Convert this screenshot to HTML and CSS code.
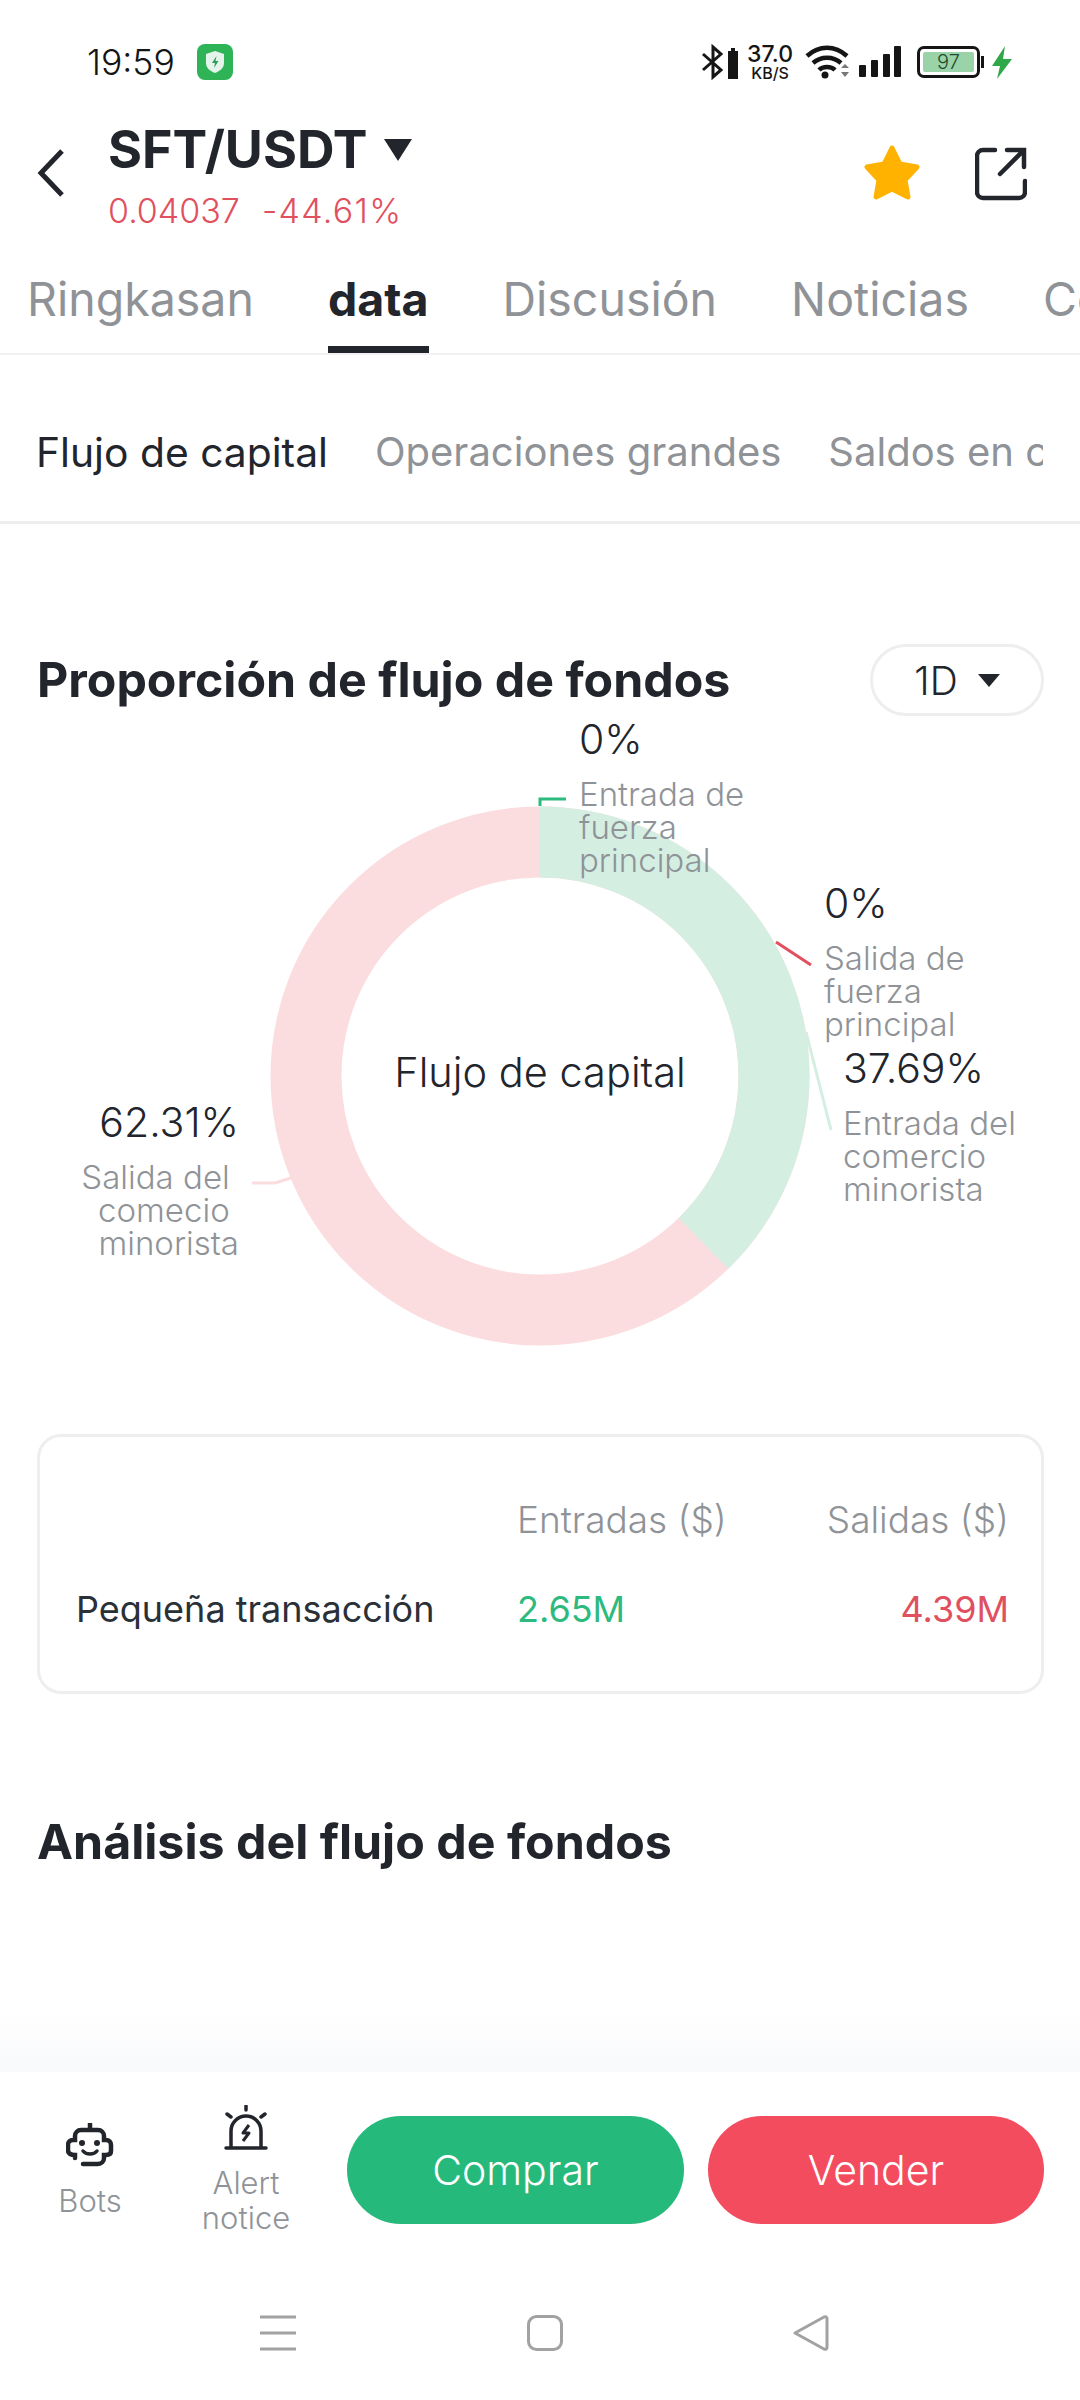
FILE: index.html
```html
<!DOCTYPE html>
<html lang="es">
<head>
  <meta charset="UTF-8">
  <meta name="viewport" content="width=device-width, initial-scale=1.0">
  <title>SFT/USDT</title>
  <link rel="stylesheet" href="styles.css">
</head>
<body>
  <div class="screen">

    <div class="status-bar">
      <div class="status-left">
        <span class="clock">19:59</span>
        <svg class="app-badge" width="36" height="36" viewBox="0 0 36 36">
          <rect width="36" height="36" rx="8" fill="#2eb457"/>
          <path d="M18 7l9 3v9c0 5-4 8-9 10-5-2-9-5-9-10v-9z" fill="#e4f4ea"/>
          <path d="M19.500 12l-4.500 7h3l-1 5 4.500-7h-3z" fill="#2a9d58"/>
        </svg>
      </div>
      <div class="status-right">
        <svg width="36" height="36" viewBox="0 0 36 36">
          <path d="M1 10l18 16-8 7V3l8 7L1 26" fill="none" stroke="#151515" stroke-width="3"/>
          <path d="M26 7h3V4h4v3h3v28H26z" fill="#151515"/>
        </svg>
        <div class="net-speed">
          <span class="net-value">37.0</span>
          <span class="net-unit">KB/S</span>
        </div>
        <svg class="wifi" width="46" height="36" viewBox="0 0 46 36">
          <path d="M2 12c12-11 28-11 40 0M8 19c8-7 20-7 28 0M14 26c4-4 12-4 16 0" fill="none" stroke="#151515" stroke-width="4.500"/>
          <circle cx="20" cy="31" r="3.500" fill="#151515"/>
          <path d="M36 24l4-4 4 4zM36 28l4 5 4-5z" fill="#777"/>
        </svg>
        <svg width="42" height="34" viewBox="0 0 42 34">
          <rect x="0" y="20" width="7" height="12" rx="1" fill="#151515"/>
          <rect x="12" y="15" width="7" height="17" rx="1" fill="#151515"/>
          <rect x="24" y="9" width="7" height="23" rx="1" fill="#151515"/>
          <rect x="35" y="1" width="7" height="31" rx="1" fill="#151515"/>
        </svg>
        <div class="battery">
          <span class="battery-level">97</span>
        </div>
        <svg class="bolt" width="20" height="33" viewBox="0 0 20 33">
          <path d="M13 0L0 20h8l-3 13 15-20h-9z" fill="#30a84a"/>
        </svg>
      </div>
    </div>

    <div class="top-bar">
      <svg class="back" width="30" height="50" viewBox="0 0 30 50">
        <path d="M25 3L4 25l21 22" fill="none" stroke="#22252b" stroke-width="5"/>
      </svg>
      <div class="pair">
        <div class="pair-name">SFT/USDT <span class="caret-big"></span></div>
        <div class="pair-price">
          <span>0.04037</span>
          <span class="pair-change">-44.61%</span>
        </div>
      </div>
      <svg class="star" width="58" height="56" viewBox="0 0 58 56">
        <path d="M29 3l8 16 17 3-12 13 3 17-16-8-16 8 3-17L4 22l17-3z" fill="#ffb300" stroke="#ffb300" stroke-width="5" stroke-linejoin="round"/>
      </svg>
      <svg class="share" width="52" height="54" viewBox="0 0 52 54">
        <path d="M20 3H8a6 6 0 0 0-6 6v36a6 6 0 0 0 6 6h36a6 6 0 0 0 6-6V34M25 27L48 4M32 3h17v17" fill="none" stroke="#22252b" stroke-width="4.500" stroke-linecap="round"/>
      </svg>
    </div>

    <div class="tabs">
      <span class="tab">Ringkasan</span>
      <span class="tab tab-active">data</span>
      <span class="tab">Discusión</span>
      <span class="tab">Noticias</span>
      <span class="tab">Comunidad</span>
    </div>

    <div class="subtabs">
      <div class="subtabs-track">
        <span class="subtab subtab-active">Flujo de capital</span>
        <span class="subtab">Operaciones grandes</span>
        <span class="subtab">Saldos en cadena</span>
      </div>
    </div>

    <main class="content">
      <div class="section-head">
        <h2>Proporción de flujo de fondos</h2>
        <div class="range-pill">1D <span class="caret-small"></span></div>
      </div>

      <div class="chart">
        <svg class="donut" width="1080" height="660" viewBox="0 0 1080 660">
          <path d="M540 99V92H566" fill="none" stroke="#2dba7f" stroke-width="3"/>
          <path d="M776 235L811 258" fill="none" stroke="#e0505f" stroke-width="3"/>
          <path d="M806 325L831 423" fill="none" stroke="#d4eee2" stroke-width="3"/>
          <path d="M252 476H275L291 471" fill="none" stroke="#fcdddf" stroke-width="3"/>
          <circle cx="540" cy="369" r="234" fill="none" stroke="#fcdddf" stroke-width="71"/>
          <circle cx="540" cy="369" r="234" fill="none" stroke="#d4eee2" stroke-width="71" pathLength="100" stroke-dasharray="37.69 62.31" transform="rotate(-90 540 369)"/>
        </svg>
        <div class="chart-center">Flujo de capital</div>

        <div class="slice slice-main-in">
          <div class="slice-pct">0%</div>
          <div class="slice-name">Entrada de<br>fuerza<br>principal</div>
        </div>
        <div class="slice slice-main-out">
          <div class="slice-pct">0%</div>
          <div class="slice-name">Salida de<br>fuerza<br>principal</div>
        </div>
        <div class="slice slice-retail-in">
          <div class="slice-pct">37.69%</div>
          <div class="slice-name">Entrada del<br>comercio<br>minorista</div>
        </div>
        <div class="slice slice-retail-out">
          <div class="slice-pct">62.31%</div>
          <div class="slice-name">Salida del&nbsp;<br>comecio&nbsp;<br>minorista</div>
        </div>
      </div>

      <div class="flow-card">
        <div class="flow-row flow-head">
          <span class="flow-label"></span>
          <span class="flow-in">Entradas ($)</span>
          <span class="flow-out">Salidas ($)</span>
        </div>
        <div class="flow-row">
          <span class="flow-label">Pequeña transacción</span>
          <span class="flow-in up">2.65M</span>
          <span class="flow-out down">4.39M</span>
        </div>
      </div>

      <h2 class="analysis-title">Análisis del flujo de fondos</h2>
    </main>

    <div class="action-fade"></div>
    <div class="action-bar">
      <div class="action-link action-bots">
        <svg width="48" height="44" viewBox="0 0 48 44">
          <path d="M24 1v6M17 41h15a6 6 0 0 0 6-6v-3h2c5 0 5-3 5-4v-6c0-3-2-5-5-5h-2v-4a6 6 0 0 0-6-6H15a6 6 0 0 0-6 6v4H7c-3 0-5 2-5 5v5c0 3 2 5 7 5v3" fill="none" stroke="#22252b" stroke-width="4.500" stroke-linecap="round"/>
          <circle cx="16" cy="20" r="3" fill="#22252b"/>
          <circle cx="31" cy="20" r="3" fill="#22252b"/>
          <path d="M17 28c3 4 11 4 14 0" fill="none" stroke="#22252b" stroke-width="3.500" stroke-linecap="round"/>
        </svg>
        <span>Bots</span>
      </div>
      <div class="action-link action-alert">
        <svg width="44" height="46" viewBox="0 0 44 46">
          <path d="M22 1v4M3 9l4 3M41 9l-4 3" fill="none" stroke="#22252b" stroke-width="3.500" stroke-linecap="round"/>
          <path d="M7 42V26a15 15 0 0 1 30 0v16M2 43h40" fill="none" stroke="#22252b" stroke-width="3.500" stroke-linecap="round"/>
          <path d="M25 20l-6 8h6l-6 8" fill="none" stroke="#22252b" stroke-width="3" stroke-linejoin="round"/>
        </svg>
        <span>Alert<br>notice</span>
      </div>
      <div class="trade-btn buy">Comprar</div>
      <div class="trade-btn sell">Vender</div>
    </div>

    <div class="nav-bar">
      <svg width="36" height="36" viewBox="0 0 36 36">
        <path d="M0 2h36M0 18h36M0 34h36" stroke="#a2a2a2" stroke-width="3"/>
      </svg>
      <svg width="36" height="36" viewBox="0 0 36 36">
        <rect x="1.500" y="1.500" width="33" height="33" rx="8" fill="none" stroke="#a2a2a2" stroke-width="3"/>
      </svg>
      <svg width="36" height="36" viewBox="0 0 36 36">
        <path d="M2 18L31 2q3-1 3 2v28q0 3-3 2z" fill="none" stroke="#a2a2a2" stroke-width="3" stroke-linejoin="round"/>
      </svg>
    </div>

  </div>
</body>
</html>
```

FILE: styles.css
```css
* {
  margin: 0;
  padding: 0;
  box-sizing: border-box;
}

body {
  font-family: Inter, "Noto Sans", sans-serif;
  background-color: #fff;
  color: #22252b;
}

.screen {
  width: 1080px;
  height: 2400px;
  display: flex;
  flex-direction: column;
  overflow: hidden;
}

/* status bar */
.status-bar {
  height: 121px;
  padding: 44px 68px 41px 87px;
  display: flex;
  justify-content: space-between;
  align-items: center;
}

.status-left {
  display: flex;
  align-items: center;
  gap: 22px;
}

.clock {
  font-size: 35.500px;
  font-weight: 300;
  color: #151515;
}

.status-right {
  display: flex;
  align-items: center;
  gap: 11px;
}

.net-speed {
  display: flex;
  flex-direction: column;
  align-items: center;
  color: #151515;
  margin-left: -2px;
}

.net-value {
  font-size: 23px;
  line-height: 21px;
  font-weight: 500;
}

.net-unit {
  font-size: 16px;
  line-height: 16px;
  font-weight: 500;
}

.wifi {
  margin-left: 1px;
  margin-right: -3px;
}

.battery {
  width: 63px;
  height: 32px;
  margin-left: 5px;
  padding: 3px;
  border: 3px solid #151515;
  border-radius: 7px;
  position: relative;
}

.battery::after {
  content: "";
  position: absolute;
  right: -7px;
  top: 7px;
  width: 3px;
  height: 12px;
  background-color: #151515;
}

.battery-level {
  display: block;
  height: 100%;
  background-color: #9bd3a9;
  border-radius: 2px;
  font-size: 20px;
  line-height: 20px;
  text-align: center;
  font-weight: 300;
  color: #1f4a2c;
}

.bolt {
  margin-left: 1px;
}

/* pair header */
.top-bar {
  height: 136px;
  padding: 0 53px 0 37px;
  display: flex;
  align-items: flex-start;
}

.back {
  margin-top: 27px;
}

.pair {
  margin-left: 41px;
  flex: 1;
}

.pair-name {
  font-size: 52px;
  line-height: 58px;
  font-weight: 700;
  display: flex;
  align-items: center;
  gap: 16px;
}

.caret-big {
  width: 0;
  height: 0;
  border-left: 14px solid transparent;
  border-right: 14px solid transparent;
  border-top: 22px solid #22252b;
}

.pair-price {
  margin-top: 10px;
  display: flex;
  gap: 22px;
  font-size: 34px;
  line-height: 44px;
  font-weight: 300;
  color: #e0505f;
}

.pair-change {
  letter-spacing: 1.300px;
}

.star {
  margin-top: 24px;
  margin-right: 54px;
}

.share {
  margin-top: 26px;
}

/* tabs */
.tabs {
  height: 98px;
  padding-left: 27px;
  display: flex;
  gap: 74px;
  white-space: nowrap;
  overflow: hidden;
  border-bottom: 2px solid #f1f1f1;
}

.tab {
  font-size: 46.500px;
  line-height: 84px;
  color: #8f9397;
  height: 96px;
}

.tab-active {
  font-weight: 700;
  color: #22252b;
  border-bottom: 7px solid #22252b;
}

.subtabs {
  height: 169px;
  padding: 67px 37px 0 36px;
  border-bottom: 3px solid #eeeeee;
}

.subtabs-track {
  display: flex;
  gap: 47px;
  white-space: nowrap;
  overflow: hidden;
}

.subtab {
  font-size: 40px;
  line-height: 60px;
  color: #8f9397;
}

.subtab-active {
  font-size: 40.800px;
  color: #22252b;
}

/* content */
.content {
  flex: 1;
  padding: 0 36px 0 37px;
  position: relative;
}

.section-head {
  margin-top: 119px;
  height: 74px;
  display: flex;
  justify-content: space-between;
  align-items: center;
}

h2 {
  font-size: 48.300px;
  font-weight: 700;
  line-height: 56px;
}

.range-pill {
  width: 174px;
  height: 72px;
  border: 3px solid #eeeeee;
  border-radius: 36px;
  display: flex;
  align-items: center;
  justify-content: center;
  gap: 20px;
  font-size: 39px;
  font-weight: 300;
}

.caret-small {
  width: 0;
  height: 0;
  border-left: 11px solid transparent;
  border-right: 11px solid transparent;
  border-top: 13px solid #22252b;
}

/* the chart is a free canvas, labels sit next to their slice */
.chart {
  position: relative;
  width: 1080px;
  height: 660px;
  margin-left: -37px;
  margin-top: -10px;
}

.donut {
  display: block;
}

.chart-center {
  position: absolute;
  left: 340px;
  width: 400px;
  top: 337px;
  text-align: center;
  font-size: 41.500px;
  line-height: 56px;
  font-weight: 300;
}

.slice {
  position: absolute;
  white-space: nowrap;
}

.slice-pct {
  font-size: 41px;
  line-height: 50px;
  font-weight: 300;
}

.slice-name {
  margin-top: 14px;
  font-size: 33px;
  line-height: 33px;
  font-weight: 300;
  color: #8f9397;
}

.slice-main-in {
  left: 579px;
  top: 7px;
}

.slice-main-out {
  left: 824px;
  top: 171px;
}

.slice-retail-in {
  left: 843px;
  top: 336px;
}

.slice-retail-out {
  right: 841px;
  top: 390px;
  text-align: right;
}

.flow-card {
  margin-top: 67px;
  height: 260px;
  padding: 0 32px 0 36px;
  border: 3px solid #eeeeee;
  border-radius: 24px;
  display: flex;
  flex-direction: column;
}

.flow-row {
  display: flex;
  align-items: center;
  height: 90px;
  font-size: 36px;
  font-weight: 400;
  color: #2a3038;
}

.flow-head {
  margin-top: 37px;
  font-size: 37px;
  font-weight: 300;
  color: #8f9397;
}

.flow-label {
  width: 441px;
}

.flow-in {
  width: 260px;
}

.flow-out {
  flex: 1;
  text-align: right;
}

.up {
  color: #2dba7f;
}

.down {
  color: #e0505f;
}

.analysis-title {
  margin-top: 120px;
}

/* bottom actions */
.action-fade {
  height: 60px;
  margin-top: -60px;
  background: linear-gradient(#ffffff, #f8f9fb);
  position: relative;
}

.action-bar {
  height: 200px;
  padding: 0 36px 4px 42px;
  display: flex;
  align-items: center;
  background-color: #fff;
  position: relative;
}

.action-link {
  width: 96px;
  display: flex;
  flex-direction: column;
  align-items: center;
  gap: 14px;
  font-size: 31px;
  line-height: 35px;
  font-weight: 300;
  color: #8f9397;
  text-align: center;
}

.action-bots {
  gap: 16px;
  margin-top: 1px;
}

.action-alert {
  margin-left: 59px;
  margin-right: 52px;
  width: 98px;
}

.trade-btn {
  height: 108px;
  border-radius: 54px;
  display: flex;
  align-items: center;
  justify-content: center;
  color: #fff;
  font-size: 41px;
  font-weight: 300;
}

.buy {
  width: 337px;
  background-color: #26b97c;
}

.sell {
  width: 336px;
  margin-left: 24px;
  background-color: #f44c5f;
}

/* system nav */
.nav-bar {
  height: 128px;
  padding: 43px 251px 0 260px;
  display: flex;
  justify-content: space-between;
  align-items: flex-start;
  background-color: #fff;
  position: relative;
}
```
